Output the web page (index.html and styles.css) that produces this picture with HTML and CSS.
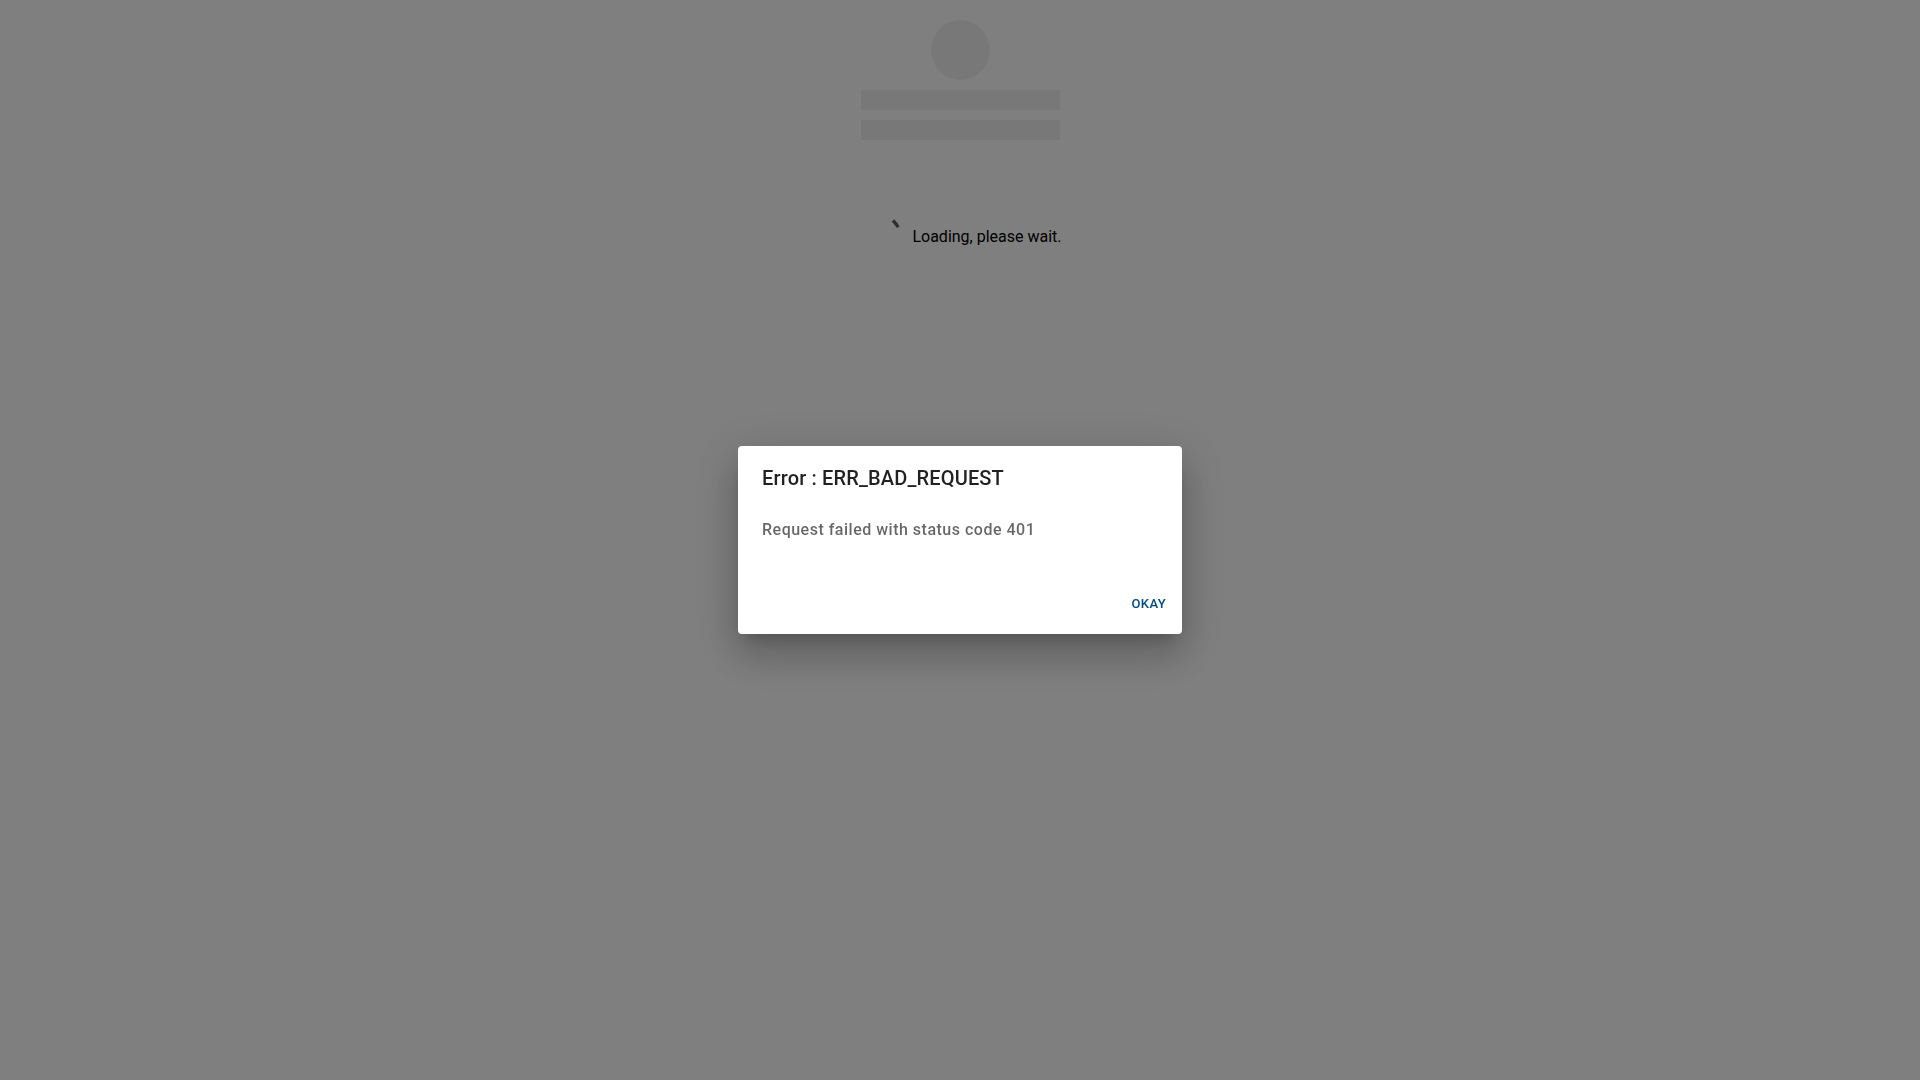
FILE: index.html
```html
<!DOCTYPE html>
<html>
<head>
    <title>Loading</title>
    <link rel="stylesheet" href="styles.css">
</head>
<body>
    <div class="container">
        <div class="skeleton-avatar"></div>
        <div class="skeleton-bar"></div>
        <div class="skeleton-bar"></div>

        <div class="loading-row">
            <svg class="spinner" width="40" height="40" viewBox="0 0 40 40">
                <path d="M35 3.5 Q38 6.5 40.2 10.2" fill="none" stroke="#5a5a5a" stroke-width="3.2" stroke-linecap="butt"/>
            </svg>
            <span class="loading-text">Loading, please wait.</span>
        </div>
    </div>

    <div class="backdrop">
        <div class="dialog">
            <h2 class="dialog-title">Error : ERR_BAD_REQUEST</h2>
            <div class="dialog-content">
                <p class="dialog-text">Request failed with status code 401</p>
            </div>
            <div class="dialog-actions">
                <button class="button">Okay</button>
            </div>
        </div>
    </div>
</body>
</html>
```

FILE: styles.css
```css
body {
    font-family: Roboto, "Liberation Sans", sans-serif;
    background: #fff;
    color: #000;
    margin: 0;
    padding: 0;
    min-height: 100vh;
}

.container {
    display: flex;
    flex-direction: column;
    align-items: center;
    padding-top: 20px;
}

.skeleton-avatar {
    width: 59px;
    height: 60px;
    border-radius: 50%;
    background: rgba(0, 0, 0, 0.055);
    margin-left: 1px;
    margin-bottom: 10px;
}

.skeleton-bar {
    width: 199px;
    height: 20px;
    background: rgba(0, 0, 0, 0.055);
    margin-left: 1px;
    margin-bottom: 10px;
}

.loading-row {
    display: flex;
    align-items: center;
    gap: 14px;
    margin-top: 67px;
}

.spinner {
    display: block;
    overflow: visible;
}

.loading-text {
    font-size: 16px;
    line-height: 24px;
}

.backdrop {
    position: fixed;
    top: 0;
    left: 0;
    right: 0;
    bottom: 0;
    display: flex;
    align-items: center;
    justify-content: center;
    background: rgba(0, 0, 0, 0.5);
}

.dialog {
    width: 444px;
    height: 188px;
    display: flex;
    flex-direction: column;
    background: #fff;
    border-radius: 4px;
    box-shadow: 0 11px 15px -7px rgba(0, 0, 0, 0.2), 0 24px 38px 3px rgba(0, 0, 0, 0.14), 0 9px 46px 8px rgba(0, 0, 0, 0.12);
}

.dialog-title {
    margin: 0;
    padding: 16px 24px;
    font-size: 20px;
    font-weight: 500;
    line-height: 32px;
    letter-spacing: 0.0075em;
    color: rgba(0, 0, 0, 0.87);
}

.dialog-content {
    flex: 1;
    padding: 8px 24px 0;
}

.dialog-text {
    margin: 0;
    font-size: 16px;
    font-weight: 500;
    line-height: 24px;
    letter-spacing: 0.5px;
    color: rgba(0, 0, 0, 0.6);
}

.dialog-actions {
    display: flex;
    justify-content: flex-end;
    padding: 8px 8px 13px;
}

.button {
    font-family: inherit;
    font-size: 13px;
    font-weight: 500;
    line-height: 22px;
    letter-spacing: 0.02857em;
    text-transform: uppercase;
    color: #004b80;
    background: none;
    padding: 6px 8px;
    border: none;
    border-radius: 4px;
    cursor: pointer;
}
```
